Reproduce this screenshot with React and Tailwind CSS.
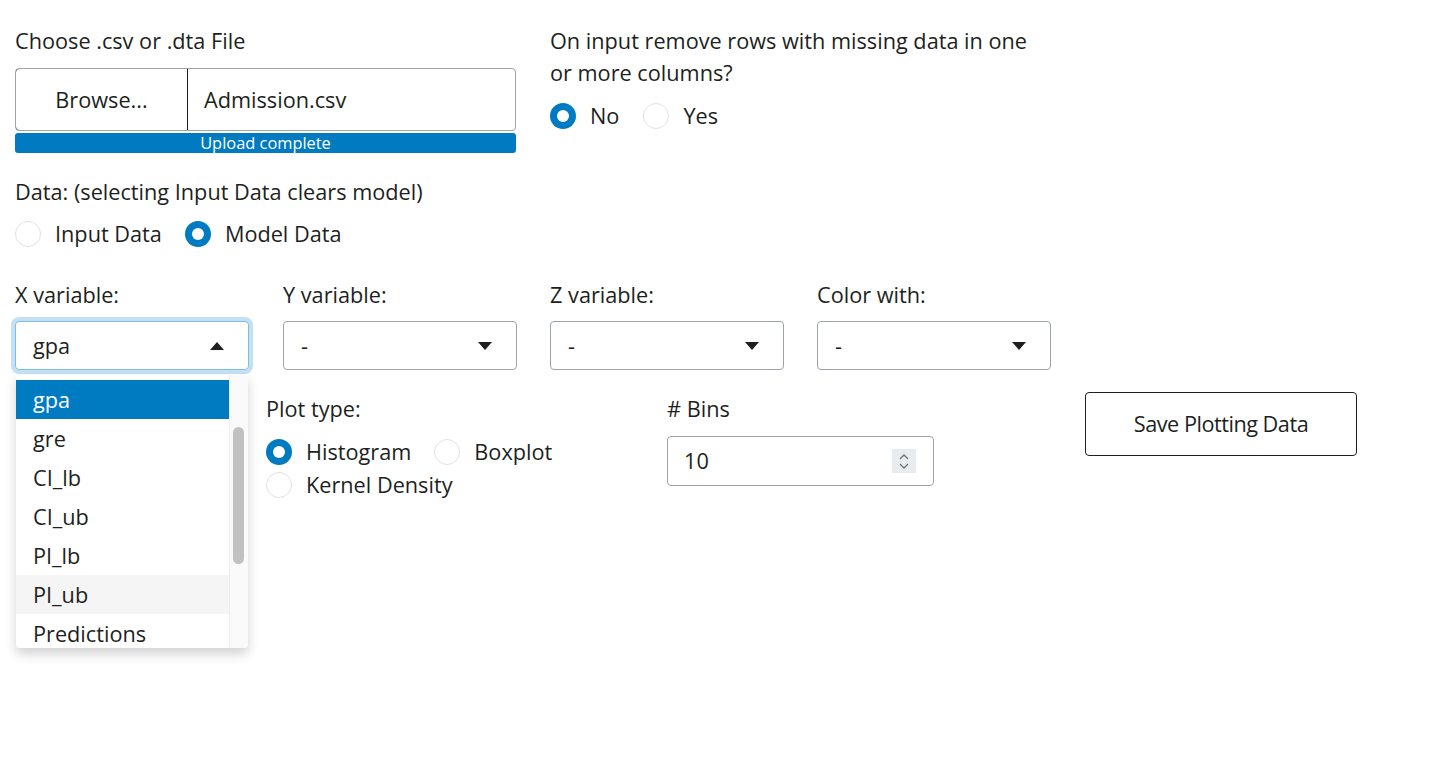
import React from 'react';

const Radio = ({ checked, label }) => (
    <label className="flex items-center h-[32px]">
        {checked ? (
            <span className="w-[26px] h-[26px] rounded-full bg-[#007bc2] flex items-center justify-center">
                <span className="w-[12px] h-[12px] rounded-full bg-white" />
            </span>
        ) : (
            <span className="w-[26px] h-[26px] rounded-full border border-[#dee2e6] bg-white" />
        )}
        <span className="ml-[14px]">{label}</span>
    </label>
);

const Caret = ({ up }) => (
    <svg width="14" height="8" viewBox="0 0 14 8" className="absolute right-[24px] top-1/2 -translate-y-1/2">
        {up ? <path d="M0 8 L7 0 L14 8 Z" fill="#1d1f21" /> : <path d="M0 0 L14 0 L7 8 Z" fill="#1d1f21" />}
    </svg>
);

const Select = ({ value, focused }) => (
    <div
        className={`relative h-[49px] rounded-[4px] border bg-white flex items-center pl-[17px] ${focused
            ? 'border-[#80bde1] ring-[4px] ring-[#c4e1f3]'
            : 'border-[#9ca3aa]'
            }`}
    >
        <span>{value}</span>
        <Caret up={focused} />
    </div>
);

const options = ['gpa', 'gre', 'CI_lb', 'CI_ub', 'PI_lb', 'PI_ub', 'Predictions'];

export default function App() {
    return (
        <div
            className="relative w-[1430px] h-[763px] bg-white text-[#1d1f21] text-[21.7px] leading-[32px] pt-[25px] pl-[15px] overflow-hidden"
            style={{ fontFamily: '"Open Sans", "Noto Sans", sans-serif' }}
        >
            {/* file + missing rows */}
            <div className="flex gap-[34px]">
                <div className="w-[501px]">
                    <div>Choose .csv or .dta File</div>
                    <div className="mt-[11px] flex h-[63px] rounded-[4px] border border-[#9ca3aa] overflow-hidden">
                        <div className="w-[173px] border-r border-[#1d1f21] flex items-center justify-center -ml-px -my-px border-l border-t border-b rounded-l-[4px]">
                            Browse...
                        </div>
                        <div className="flex items-center pl-[16px]">Admission.csv</div>
                    </div>
                    <div className="mt-[2px] h-[20px] rounded-[3px] bg-[#007bc2] text-white text-[16.4px] leading-[20px] text-center">
                        Upload complete
                    </div>
                </div>
                <div className="w-[490px]">
                    <div>On input remove rows with missing data in one or more columns?</div>
                    <div className="mt-[11px] flex gap-[24px]">
                        <Radio checked label="No" />
                        <Radio label="Yes" />
                    </div>
                </div>
            </div>

            {/* data source */}
            <div className="mt-[23px]">Data: (selecting Input Data clears model)</div>
            <div className="mt-[10px] flex gap-[23px]">
                <Radio label="Input Data" />
                <Radio checked label="Model Data" />
            </div>

            {/* variables */}
            <div className="mt-[29px] grid grid-cols-[268px_267px_267px_234px]">
                {[
                    ['X variable:', 'gpa', true],
                    ['Y variable:', '-', false],
                    ['Z variable:', '-', false],
                    ['Color with:', '-', false],
                ].map(([label, value, focused]) => (
                    <div key={label} className="w-[234px]">
                        <div>{label}</div>
                        <div className="mt-[10px]">
                            <Select value={value} focused={focused} />
                        </div>
                    </div>
                ))}
            </div>

            {/* plot options */}
            <div className="mt-[22px] grid grid-cols-[251px_401px_418px_272px]">
                <div />
                <div className="pt-[1px]">
                    <div>Plot type:</div>
                    <div className="mt-[11px] flex gap-[23px]">
                        <Radio checked label="Histogram" />
                        <Radio label="Boxplot" />
                    </div>
                    <div className="mt-[1px]">
                        <Radio label="Kernel Density" />
                    </div>
                </div>
                <div className="pt-[1px]">
                    <div># Bins</div>
                    <div className="mt-[11px] relative w-[267px] h-[50px] rounded-[4px] border border-[#9ca3aa] flex items-center pl-[16px]">
                        <span>10</span>
                        <div className="absolute right-[17px] top-[12px] w-[24px] h-[24px] bg-[#e9ecef] flex flex-col items-center justify-center gap-[3px]">
                            <svg width="10" height="6" viewBox="0 0 10 6">
                                <path d="M1 5 L5 1 L9 5" fill="none" stroke="#6c757d" strokeWidth="1.3" />
                            </svg>
                            <svg width="10" height="6" viewBox="0 0 10 6">
                                <path d="M1 1 L5 5 L9 1" fill="none" stroke="#6c757d" strokeWidth="1.3" />
                            </svg>
                        </div>
                    </div>
                </div>
                <div>
                    <div className="w-[272px] h-[64px] rounded-[4px] border border-[#1d1f21] flex items-center justify-center tracking-[-0.5px]">
                        Save Plotting Data
                    </div>
                </div>
            </div>

            {/* open dropdown */}
            <div className="absolute left-[16px] top-[375px] w-[232px] h-[273px] bg-white shadow-[0_6px_12px_rgba(0,0,0,0.18)] rounded-b-[4px] flex overflow-hidden">
                <div className="w-[213px] pt-[5px]">
                    {options.map((o, i) => (
                        <div
                            key={o}
                            className={`h-[39px] pl-[17px] flex items-center ${i === 0 ? 'bg-[#007bc2] text-white' : i === 5 ? 'bg-[#f5f5f5]' : ''
                                }`}
                        >
                            {o}
                        </div>
                    ))}
                </div>
                <div className="w-[19px] bg-[#fafafa] border-l border-[#ececec] pt-[52px] pl-[3px]">
                    <div className="w-[11px] h-[137px] rounded-full bg-[#c1c1c1]" />
                </div>
            </div>
        </div>
    );
}
